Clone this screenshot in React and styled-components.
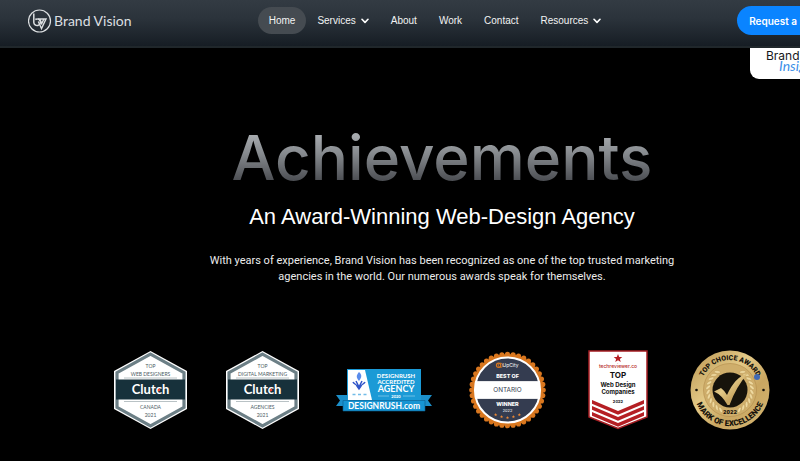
import React from "react";
import styled, { createGlobalStyle } from "styled-components";

const GlobalStyle = createGlobalStyle`
  * { box-sizing: border-box; }
  body {
    margin: 0;
    background: #000;
    color: #fff;
    overflow-x: hidden;
    font-family: "Liberation Sans", Arial, sans-serif;
  }
  h1, h2, p, ul { margin: 0; padding: 0; }
`;

const Page = styled.div`
  min-width: 882px;
`;

const Header = styled.header`
  display: grid;
  grid-template-columns: 1fr auto 1fr;
  align-items: center;
  height: 48px;
  padding: 0 28px 5px;
  background: linear-gradient(#333b43, #2b333b 40%, #161d24);
  border-bottom: 2px solid #20272b;
`;

const Brand = styled.a`
  display: flex;
  align-items: center;
  gap: 2px;
  color: #dcdfe1;
  font: 400 14px Lato, sans-serif;
  text-decoration: none;
`;

const Nav = styled.nav`
  display: flex;
  align-items: center;
  margin-right: 12px;
`;

const navItem = `
  display: flex;
  align-items: center;
  gap: 5px;
  height: 27px;
  padding: 0 11px;
  border: 0;
  border-radius: 14px;
  color: #f2f3f3;
  font: 400 10px "Liberation Sans", Arial, sans-serif;
  text-decoration: none;
  white-space: nowrap;
`;

const NavLink = styled.a`
  ${navItem}
  background: ${(p) => (p.$active ? "#454b51" : "transparent")};
`;

const NavButton = styled.button`
  ${navItem}
  background: transparent;
`;

const RequestLink = styled.a`
  justify-self: end;
  display: flex;
  align-items: center;
  height: 29px;
  padding: 0 12px;
  border-radius: 15px;
  background: #0a84ff;
  color: #fff;
  font: 600 10px Inter, sans-serif;
  text-decoration: none;
  white-space: nowrap;
`;

const InsightsTab = styled.a`
  display: flex;
  flex-direction: column;
  width: 132px;
  height: 31px;
  margin-left: auto;
  padding: 1px 0 0 16px;
  border-radius: 0 0 0 9px;
  background: #fff;
  color: #16181a;
  font: 400 12px/14px Inter, sans-serif;
  text-decoration: none;
`;

const Script = styled.span`
  margin: -4px 0 0 13px;
  color: #3b8fe8;
  font: italic 400 14px/14px Lato, cursive;
`;

const Hero = styled.main`
  display: flex;
  flex-direction: column;
  align-items: center;
  padding: 40px 0 0 2px;
  text-align: center;
`;

const Title = styled.h1`
  font: 500 62px/78px Inter, sans-serif;
  color: transparent;
  background: linear-gradient(#b5b9bd 10%, #85898d 45%, #424449 85%);
  background-clip: text;
  -webkit-background-clip: text;
`;

const Subtitle = styled.h2`
  margin-top: 6px;
  font-size: 22px;
  line-height: 28px;
  font-weight: 400;
`;

const Lead = styled.p`
  max-width: 480px;
  margin-top: 22px;
  color: #ececec;
  font: 400 11px/16px Roboto, sans-serif;
`;

const Badges = styled.ul`
  display: flex;
  align-items: center;
  gap: 39px;
  margin-top: 65px;
  list-style: none;
`;

const Badge = styled.li`
  display: flex;

  svg { overflow: visible; }
`;

function BrandMark() {
  return (
    <svg width="24" height="24" viewBox="0 0 24 24" fill="none" stroke="currentColor" aria-hidden="true">
      <circle cx="11.5" cy="12" r="11" strokeWidth="1.2" />
      <path d="M5.8 4.5V13.5a3.3 3.3 0 1 0 1.5-3" strokeWidth="1.5" />
      <path d="M10 10h8l-4.5 9.5L10.3 12.5M12 10.5l1.7 4 2-4" strokeWidth="1.4" />
    </svg>
  );
}

function Chevron() {
  return (
    <svg width="8" height="6" viewBox="0 0 8 6" fill="none" stroke="#fff" strokeWidth="1.6" strokeLinecap="round" strokeLinejoin="round" aria-hidden="true">
      <path d="M1 1.3 4 4.4 7 1.3" />
    </svg>
  );
}

function ClutchBadge({ category, place }) {
  return (
    <svg width="73" height="78" viewBox="0 0 73 78" textAnchor="middle" fontFamily="Lato" fontSize="5" fill="#4b5b63" role="img" aria-label={`Clutch top ${category}`}>
      <path d="M36.5 0 73 20v38L36.5 78 0 58V20Z" fill="#fff" />
      <path d="M36.5 3.2 70 21.7v34.6L36.5 74.8 3 56.3V21.7Z" fill="#fff" stroke="#6c7f86" strokeWidth="3.2" />
      <rect x="2" y="28.5" width="69" height="20" fill="#17313b" />
      <path d="M10 27h53M10 50.5h53" stroke="#b9c2c5" />
      <text x="36.5" y="17">TOP</text>
      <text x="36.5" y="24.5">{category}</text>
      <text x="36.5" y="43" fontSize="13" fontWeight="700" fill="#fff">Clutch</text>
      <circle cx="45" cy="39" r="1.3" fill="#ef4335" />
      <text x="36.5" y="57.5">{place}</text>
      <text x="36.5" y="65.5">2021</text>
    </svg>
  );
}

function DesignRushBadge() {
  return (
    <svg width="92" height="43" viewBox="2 0 92 43" textAnchor="middle" fontFamily="Lato" fontWeight="700" fill="#fff" role="img" aria-label="DesignRush accredited agency 2020">
      <path d="M0 26h14v11H0l4-5.5ZM96 26H82v11h14l-4-5.5Z" fill="#1c8fc9" />
      <rect x="11" y="0" width="74" height="32" fill="#1b9ad6" />
      <path d="M12 1h17l7 30H12Z" />
      <path d="M17 13c1 2 3 2 4 4l2 3 2-3c1-2 3-2 4-4M20 12l3 6 3-6" fill="none" stroke="#3155c9" strokeWidth="1.5" />
      <path d="M23 3c3 3 3 5 0 9-3-4-3-5 0-9Z" fill="#5a8cec" />
      <path d="M16.5 25.5h3M22 25.5h3M27.5 25.5h3" stroke="#72bce8" strokeWidth="1.5" />
      <text x="60" y="8.5" fontSize="6">DESIGNRUSH</text>
      <text x="60" y="14.5" fontSize="6">ACCREDITED</text>
      <text x="60" y="23" fontSize="9">AGENCY</text>
      <text x="60" y="28.5" fontSize="4">2020</text>
      <path d="M42 27h11M67 27h12" stroke="#a6d9f1" strokeWidth=".6" />
      <path d="M7 31.5h82V42H7Z" fill="#1695d3" stroke="#0b5d8c" strokeWidth=".6" />
      <text x="48" y="39.5" fontSize="8.5">DESIGNRUSH.com</text>
    </svg>
  );
}

const teeth = Array.from({ length: 40 }, (_, i) => (i * Math.PI) / 20);

function UpCityBadge() {
  return (
    <svg width="77" height="78" viewBox="0 0 78 78" textAnchor="middle" fontFamily="Inter" fill="#fff" role="img" aria-label="UpCity best of Ontario winner 2022">
      {teeth.map((a) => (
        <circle key={a} cx={39 + 36.2 * Math.cos(a)} cy={39 + 36.2 * Math.sin(a)} r="2.6" fill="#d9771f" />
      ))}
      <circle cx="39" cy="39" r="36.5" fill="#d9771f" />
      <circle cx="39" cy="39" r="33" fill="#343c50" stroke="#fff" strokeWidth="2" />
      <rect x="6" y="30" width="66" height="18" />
      <circle cx="30" cy="14" r="2.2" fill="none" stroke="#d9771f" strokeWidth="1.2" />
      <circle cx="32" cy="14" r="2.2" fill="none" stroke="#d9771f" strokeWidth=".8" />
      <text x="42" y="16" fontSize="5">UpCity</text>
      <text x="39" y="26.5" fontSize="5.5" fontWeight="800">BEST OF</text>
      <text x="39" y="41.3" fontSize="6.5" fill="#343c50">ONTARIO</text>
      <text x="39" y="55.5" fontSize="5.5" fontWeight="800">WINNER</text>
      <text x="39" y="61" fontSize="4">2022</text>
      {[[27, 64], [33, 66], [39, 67], [45, 66], [51, 64]].map(([x, y]) => (
        <path key={x} transform={`translate(${x} ${y})`} d="M0-1.7.5-.5 1.7-.5.7.3 1 1.5 0 .8-1 1.5-.7.3-1.7-.5-.5-.5Z" fill="#f08a34" />
      ))}
    </svg>
  );
}

function TechReviewerBadge() {
  return (
    <svg width="66" height="80" viewBox="-3 0 66 80" textAnchor="middle" fontFamily="Inter" fontWeight="700" fill="#111" role="img" aria-label="Techreviewer top web design companies 2022">
      <path d="M1 1h58v66L30 78.5 1 67Z" fill="#fff" stroke="#a51d22" strokeWidth="1.5" />
      <path d="M30 4l1.2 3h3.1l-2.4 2 .8 3L30 10.3 27.3 12l.8-3-2.4-2h3.1Z" fill="#b51f24" />
      <text x="30" y="17.5" fontSize="5" fontWeight="500" fill="#b51f24">techreviewer.co</text>
      <text x="30" y="28" fontSize="8">TOP</text>
      <text x="30" y="37" fontSize="6">Web Design</text>
      <text x="30" y="43.5" fontSize="6">Companies</text>
      <text x="30" y="52.5" fontSize="4">2022</text>
      <path d="M4 50 30 61 56 50v3.8L30 64.8 4 53.8ZM4 56 30 67 56 56v3.8L30 70.8 4 59.8ZM4 62 30 73 56 62v3.8L30 76.8 4 65.8Z" fill="#b51f24" />
    </svg>
  );
}

const leaves = Array.from({ length: 11 }, (_, i) => 35 + i * 12);

function ExcellenceBadge() {
  return (
    <svg width="80" height="80" viewBox="0 0 80 80" textAnchor="middle" fontFamily="Roboto" fontWeight="900" fill="#17130b" role="img" aria-label="Top choice award, mark of excellence 2022">
      <defs>
        <linearGradient id="gold" x2="1" y2="1">
          <stop stopColor="#b89450" />
          <stop offset=".4" stopColor="#e3c987" />
          <stop offset=".65" stopColor="#c9a661" />
          <stop offset="1" stopColor="#d7b873" />
        </linearGradient>
        <path id="upperArc" d="M10 40a30 30 0 0 1 60 0" />
        <path id="lowerArc" d="M4 40a36 36 0 0 0 72 0" />
      </defs>
      <circle cx="40" cy="40" r="39.5" fill="url(#gold)" />
      <circle cx="40" cy="40" r="26.5" fill="#cfae6b" stroke="#b18c4c" strokeWidth=".6" />
      {leaves.map((d) => (
        <g key={d} fill="#eed9a0" stroke="#b4914f" strokeWidth=".3">
          <ellipse cx="40" cy="18" rx="1.3" ry="3" transform={`rotate(${d} 40 40) rotate(50 40 18)`} />
          <ellipse cx="40" cy="18" rx="1.3" ry="3" transform={`rotate(${-d} 40 40) rotate(-50 40 18)`} />
        </g>
      ))}
      <circle cx="40" cy="40" r="17.5" />
      <path d="M24 41.5 31 38q4 3 6 7Q45 27 58 23 46 37 39.5 55h-2Q32 45 24 41.5Z" fill="url(#gold)" />
      <rect x="32" y="58" width="16" height="7" fill="#cfae6b" />
      <text x="40" y="64" fontSize="6">2022</text>
      <text fontSize="7"><textPath href="#upperArc" startOffset="50%">TOP CHOICE AWARD</textPath></text>
      <text fontSize="8"><textPath href="#lowerArc" startOffset="50%">MARK OF EXCELLENCE</textPath></text>
      <circle cx="6.5" cy="40" r="1.3" />
      <circle cx="73.5" cy="40" r="1.3" />
      <circle cx="67" cy="27" r="3" fill="#4169b5" />
    </svg>
  );
}

export default function App() {
  return (
    <Page>
      <GlobalStyle />
      <Header>
        <Brand href="#"><BrandMark />Brand Vision</Brand>
        <Nav>
          <NavLink href="#" $active>Home</NavLink>
          <NavButton>Services<Chevron /></NavButton>
          <NavLink href="#">About</NavLink>
          <NavLink href="#">Work</NavLink>
          <NavLink href="#">Contact</NavLink>
          <NavButton>Resources<Chevron /></NavButton>
        </Nav>
        <RequestLink href="#">Request a Proposal</RequestLink>
      </Header>
      <InsightsTab href="#">Brand Vision<Script>Insights</Script></InsightsTab>
      <Hero>
        <Title>Achievements</Title>
        <Subtitle>An Award-Winning Web-Design Agency</Subtitle>
        <Lead>
          With years of experience, Brand Vision has been recognized as one of the top trusted
          marketing agencies in the world. Our numerous awards speak for themselves.
        </Lead>
        <Badges>
          <Badge><ClutchBadge category="WEB DESIGNERS" place="CANADA" /></Badge>
          <Badge><ClutchBadge category="DIGITAL MARKETING" place="AGENCIES" /></Badge>
          <Badge><DesignRushBadge /></Badge>
          <Badge><UpCityBadge /></Badge>
          <Badge><TechReviewerBadge /></Badge>
          <Badge><ExcellenceBadge /></Badge>
        </Badges>
      </Hero>
    </Page>
  );
}
